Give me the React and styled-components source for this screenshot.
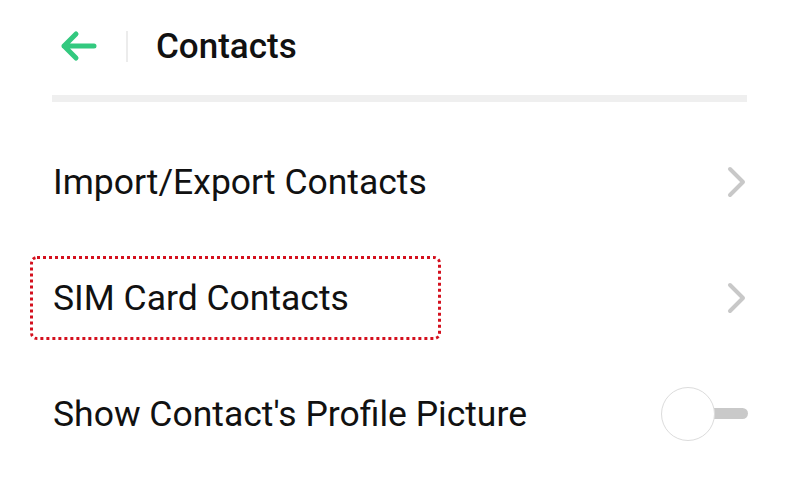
import React from "react"
import styled, { createGlobalStyle } from "styled-components"

const GlobalStyle = createGlobalStyle`
    html, body {
        margin: 0;
        padding: 0;
        background: #fff;
    }
    body {
        font-family: Roboto, "Noto Sans", Arial, sans-serif;
        color: #111;
    }
`

const Page = styled.div`
    width: 800px;
    height: 501px;
    box-sizing: border-box;
    padding: 0 53px 0 52px;
    background: #fff;
    overflow: hidden;
`

const Header = styled.div`
    display: flex;
    align-items: center;
    height: 92px;
    padding-left: 8px;
`

const BackButton = styled.button`
    display: flex;
    align-items: center;
    justify-content: center;
    width: 40px;
    height: 40px;
    margin-left: -2px;
    padding: 0;
    border: none;
    background: none;
`

const Divider = styled.span`
    width: 2px;
    height: 31px;
    margin: 0 28px 0 28px;
    background: #ececec;
`

const Title = styled.h1`
    margin: 0;
    font-size: 35px;
    font-weight: 500;
    color: #111;
`

const Bar = styled.div`
    height: 7px;
    margin-top: 3px;
    background: #efefef;
`

const List = styled.div`
    display: flex;
    flex-direction: column;
    padding-top: 22px;
`

const Row = styled.div`
    position: relative;
    display: flex;
    align-items: center;
    justify-content: space-between;
    height: 116px;
`

const Label = styled.span`
    font-size: 35.5px;
    color: #111;
    padding-left: 1px;
`

const Highlight = styled.div`
    position: absolute;
    left: -22px;
    top: 16px;
    width: 411px;
    height: 84px;
    box-sizing: border-box;
    border: 3px dotted #d4101e;
    border-radius: 7px;
    pointer-events: none;
`

const Toggle = styled.div`
    position: relative;
    width: 87px;
    height: 54px;
    margin-right: -1px;
`

const Track = styled.div`
    position: absolute;
    right: 0;
    top: 21px;
    width: 50px;
    height: 11px;
    border-radius: 6px;
    background: #c9c9c9;
`

const Knob = styled.div`
    position: absolute;
    left: 0;
    top: 0;
    width: 52px;
    height: 52px;
    border-radius: 50%;
    background: #fff;
    border: 1px solid #dcdcdc;
`

const BackArrow = () => (
    <svg width="40" height="34" viewBox="0 0 40 34">
        <path d="M36 17H6M18 5L6 17l12 12" fill="none" stroke="#33c97f" strokeWidth="5" strokeLinecap="round" strokeLinejoin="round" />
    </svg>
)

const Chevron = () => (
    <svg width="22" height="34" viewBox="0 0 22 34">
        <path d="M5 4l13 13L5 30" fill="none" stroke="#c8c8c8" strokeWidth="4" strokeLinecap="round" strokeLinejoin="round" />
    </svg>
)

const items = [
    { label: "Import/Export Contacts", type: "link" },
    { label: "SIM Card Contacts", type: "link", marked: true },
    { label: "Show Contact's Profile Picture", type: "toggle" },
]

export default function App() {
    return (
        <Page>
            <GlobalStyle />
            <Header>
                <BackButton aria-label="Back">
                    <BackArrow />
                </BackButton>
                <Divider />
                <Title>Contacts</Title>
            </Header>
            <Bar />
            <List>
                {items.map(item => (
                    <Row key={item.label}>
                        <Label>{item.label}</Label>
                        {item.type === "link" ? (
                            <Chevron />
                        ) : (
                            <Toggle>
                                <Track />
                                <Knob />
                            </Toggle>
                        )}
                        {item.marked && <Highlight />}
                    </Row>
                ))}
            </List>
        </Page>
    )
}
